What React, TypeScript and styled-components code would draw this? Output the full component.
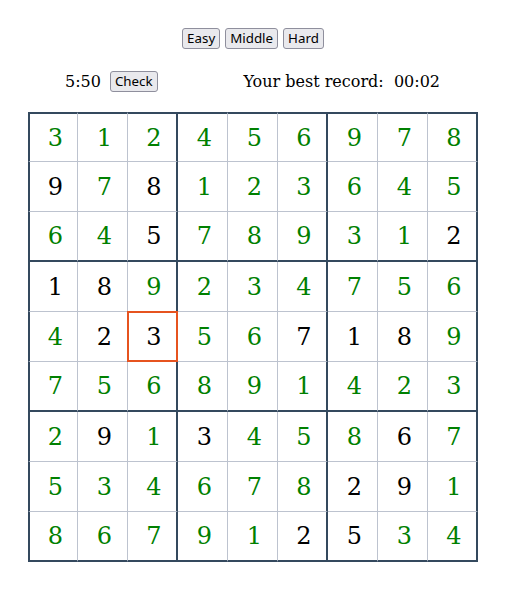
import React from "react";
import styled, { createGlobalStyle } from "styled-components";

const GlobalStyle = createGlobalStyle`
  body {
    margin: 8px;
    background: #ffffff;
    font-family: "DejaVu Serif", serif;
    color: #000;
  }
`;

const Wrapper = styled.div`
  width: 450px;
  padding: 20px 20px;
`;

const LevelBar = styled.div`
  display: flex;
  justify-content: center;
  gap: 5px;
  height: 21px;
`;

const Button = styled.button`
  font-family: "Noto Sans", sans-serif;
  font-size: 13.33px;
  line-height: 15px;
  padding: 2px 4px;
  height: 21px;
  background: #e9e9ed;
  color: #000;
  border: 1px solid #8f8f9d;
  border-radius: 3px;
  margin: 0;
`;

const InfoRow = styled.div`
  margin-top: 17px;
  height: 30px;
  padding: 0 38px 0 37px;
  display: flex;
  align-items: center;
  justify-content: space-between;
  font-size: 16px;
`;

const TimerGroup = styled.div`
  display: flex;
  align-items: center;
  gap: 9px;
`;

const Board = styled.div`
  margin-top: 16px;
  display: grid;
  grid-template-columns: repeat(9, 50px);
  grid-template-rows: repeat(9, 50px);
  width: 450px;
`;

const Cell = styled.div<{ $row: number; $col: number; $given: boolean; $selected: boolean }>`
  position: relative;
  box-sizing: border-box;
  display: flex;
  align-items: center;
  justify-content: center;
  padding-left: 4px;
  font-size: 24px;
  color: ${(p) => (p.$given ? "#000000" : "#008000")};
  border-right: ${(p) => (p.$col % 3 === 2 ? "2px solid #34495e" : "1px solid #bdc3cf")};
  border-bottom: ${(p) => (p.$row % 3 === 2 ? "2px solid #34495e" : "1px solid #bdc3cf")};
  border-left: ${(p) => (p.$col === 0 ? "2px solid #34495e" : "none")};
  border-top: ${(p) => (p.$row === 0 ? "2px solid #34495e" : "none")};
  ${(p) =>
    p.$selected
      ? `&::after {
    content: "";
    position: absolute;
    top: -1px;
    left: -1px;
    right: -2px;
    bottom: -1px;
    border: 2px solid #e6531f;
    box-sizing: border-box;
  }`
      : ""}
`;

const values = [
  "312456978",
  "978123645",
  "645789312",
  "189234756",
  "423567189",
  "756891423",
  "291345867",
  "534678291",
  "867912534",
];

// b = black (given), g = green
const kinds = [
  "ggggggggg",
  "bgbgggggg",
  "ggbgggggb",
  "bbggggggg",
  "gbbggbbbg",
  "ggggggggg",
  "gbgbgggbg",
  "ggggggbbg",
  "gggggbbgg",
];

export default function App() {
  return (
    <>
      <GlobalStyle />
      <Wrapper>
        <LevelBar>
          <Button>Easy</Button>
          <Button>Middle</Button>
          <Button>Hard</Button>
        </LevelBar>
        <InfoRow>
          <TimerGroup>
            <span>5:50</span>
            <Button>Check</Button>
          </TimerGroup>
          <span>Your best record:&nbsp; 00:02</span>
        </InfoRow>
        <Board>
          {values.map((row, r) =>
            row.split("").map((v, c) => (
              <Cell
                key={`${r}-${c}`}
                $row={r}
                $col={c}
                $given={kinds[r][c] === "b"}
                $selected={r === 4 && c === 2}
              >
                {v}
              </Cell>
            ))
          )}
        </Board>
      </Wrapper>
    </>
  );
}
